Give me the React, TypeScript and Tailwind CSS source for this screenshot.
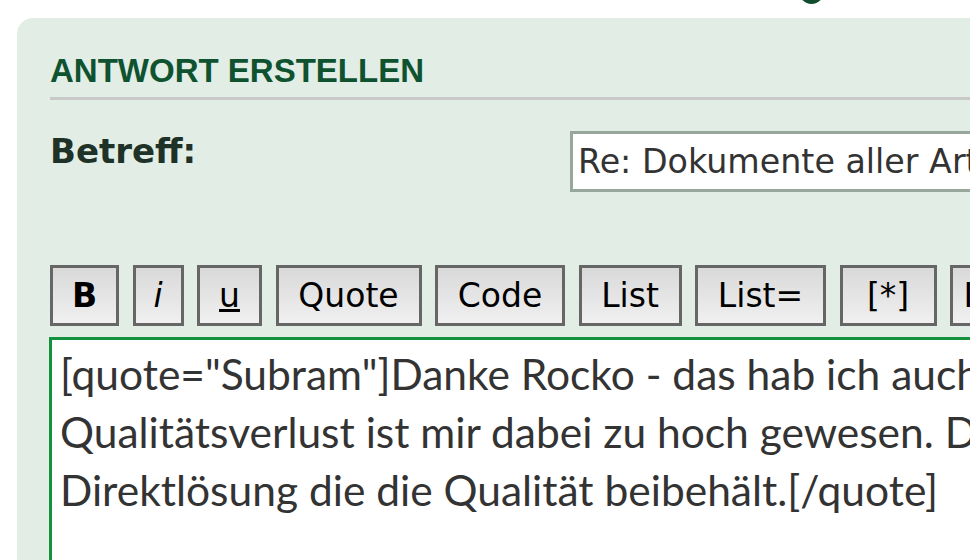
import React from 'react';

const buttons: { label: React.ReactNode; w: string }[] = [
  { label: <b>B</b>, w: 'w-[69px]' },
  { label: <i>i</i>, w: 'w-[51px]' },
  { label: <u>u</u>, w: 'w-[65px]' },
  { label: 'Quote', w: 'w-[146px]' },
  { label: 'Code', w: 'w-[130px]' },
  { label: 'List', w: 'w-[103px]' },
  { label: 'List=', w: 'w-[131px]' },
  { label: '[*]', w: 'w-[97px]' },
  { label: 'Img', w: 'w-[90px]' },
];

function App() {
  return (
    <div className="relative h-[560px] w-[970px] overflow-hidden bg-white">
      {/* bit of a round icon peeking in from above */}
      <div className="absolute left-[799px] top-[-40px] h-[44px] w-[25px] rounded-full bg-[#0f4d2c]" />

      <div className="ml-[17px] mt-[18px] h-[600px] w-[1000px] rounded-tl-[16px] bg-[#e2ede5] pl-[33px] pt-[36px]">
        <h2 className="font-['Liberation_Sans',Arial,sans-serif] text-[33px] font-bold leading-[34px] text-[#0e5230]">
          ANTWORT ERSTELLEN
        </h2>
        <div className="mt-[9px] h-[3px] bg-[#c9c9c9]" />

        <div className="mt-[31px] flex items-start">
          <div className="w-[520px] shrink-0 font-['DejaVu_Sans',Verdana,sans-serif] text-[34px] font-bold leading-[40px] text-[#1f3228]">
            Betreff:
          </div>
          <div className="flex h-[61px] w-[600px] shrink-0 items-center overflow-hidden whitespace-nowrap border-[3px] border-[#97a79b] bg-white pl-[5px] font-['DejaVu_Sans',Verdana,sans-serif] text-[33.3px] text-[#333333]">
            Re: Dokumente aller Art in PDF umwandeln
          </div>
        </div>

        <div className="mt-[73px] flex gap-[13.5px]">
          {buttons.map((b, i) => (
            <div
              key={i}
              className={`flex h-[61px] shrink-0 items-center justify-center border-[3px] border-[#666666] bg-gradient-to-b from-[#d9d9d9] to-[#f0f0f0] font-['DejaVu_Sans',Verdana,sans-serif] text-[33px] text-black ${b.w}`}
            >
              {b.label}
            </div>
          ))}
        </div>

        <div className="mt-[11px] -ml-[1px] h-[300px] w-[1000px] overflow-hidden border-[3px] border-[#13913d] bg-white pl-[8px] pt-[5px] font-['Lato','Noto_Sans',sans-serif] text-[42.5px] leading-[58px] text-[#333333]">
          <div className="whitespace-nowrap">[quote="Subram"]Danke Rocko - das hab ich auch versucht</div>
          <div className="whitespace-nowrap">Qualitätsverlust ist mir dabei zu hoch gewesen. Deshalb</div>
          <div className="whitespace-nowrap">Direktlösung die die Qualität beibehält.[/quote]</div>
        </div>
      </div>
    </div>
  );
}

export default App;
